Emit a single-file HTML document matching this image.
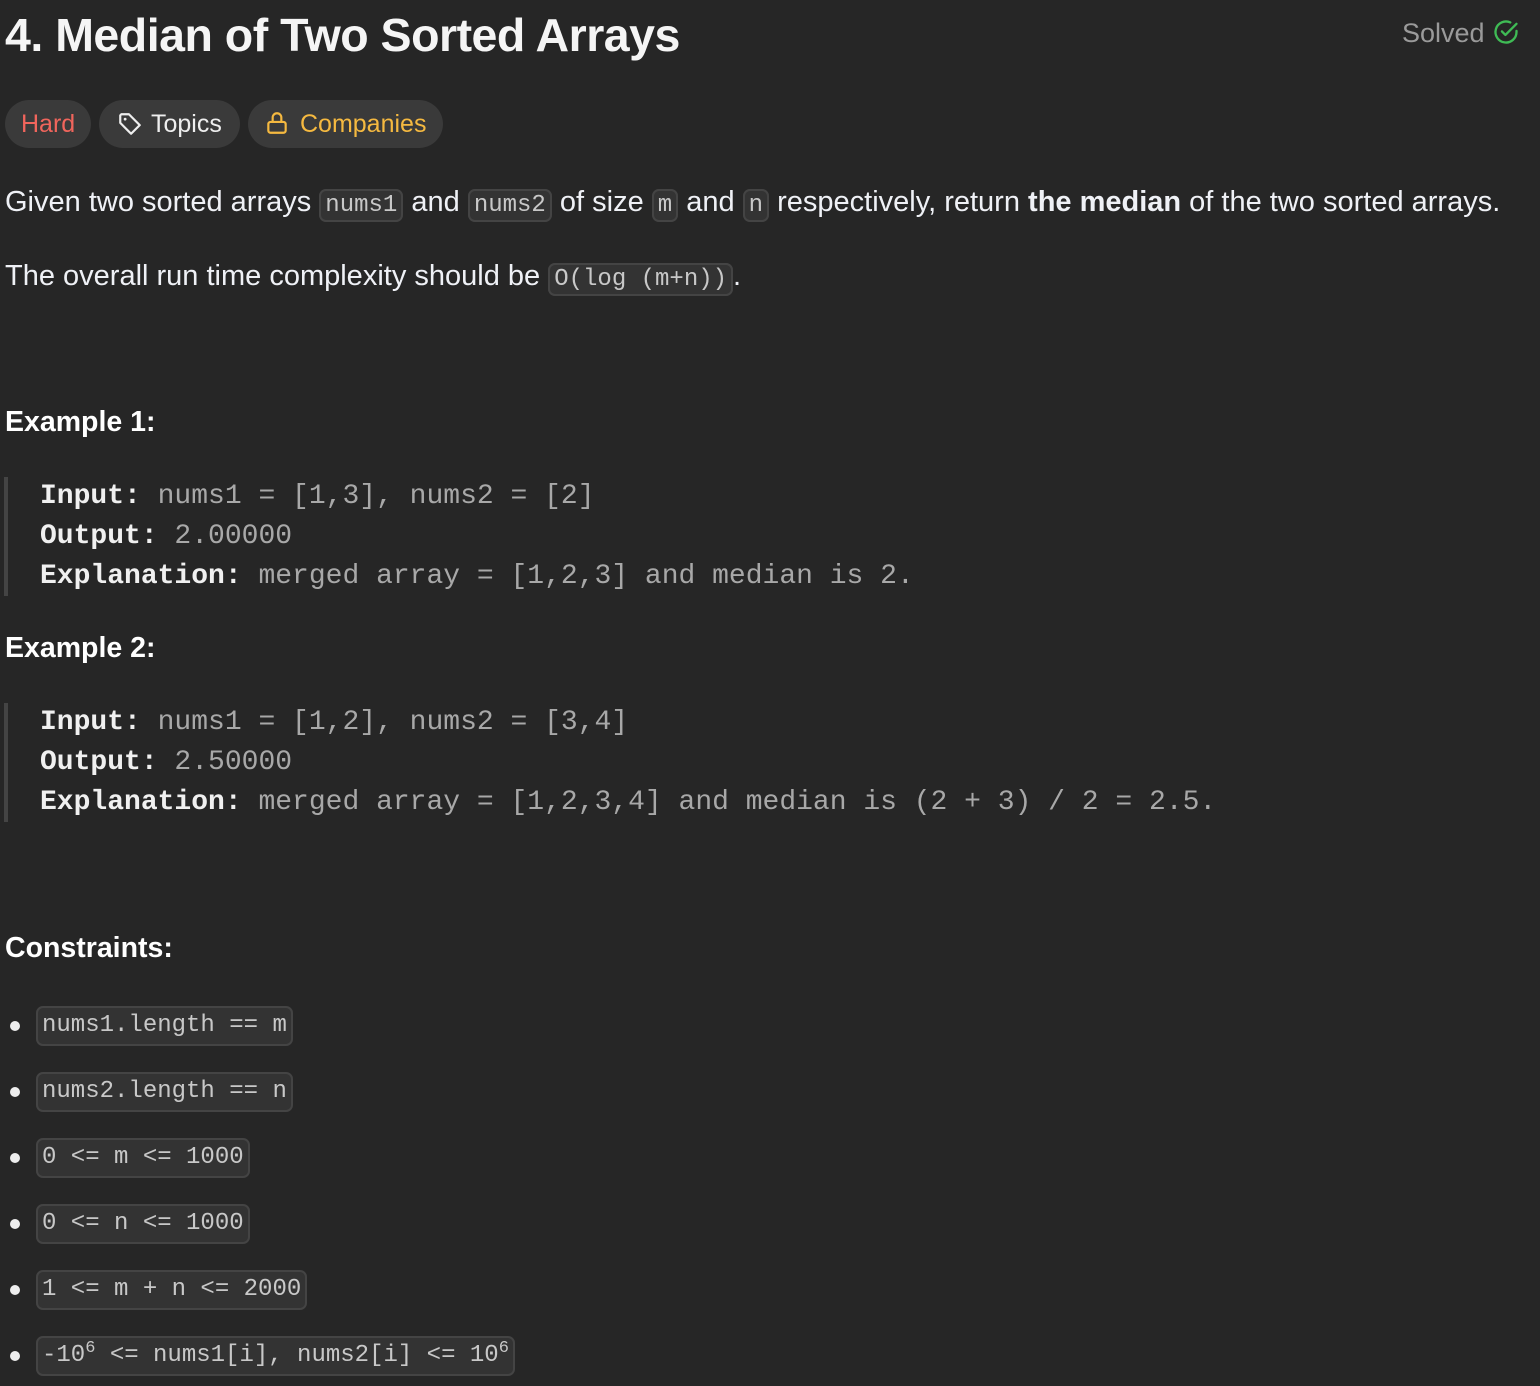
<!DOCTYPE html>
<html><head><meta charset="utf-8"><style>
body{margin:0;background:#262626;width:1540px;height:1386px;overflow:hidden;font-family:"Liberation Sans",sans-serif;color:#eff1f6;position:relative}
.a{position:absolute;white-space:nowrap}
h1{position:absolute;left:5px;top:8px;margin:0;font-size:46.5px;font-weight:bold;letter-spacing:-0.5px;color:#f5f5f5}
.pill{position:absolute;top:100px;height:48px;border-radius:24px;background:#3a3a3a;font-size:25px;line-height:48px;padding:0 16px;box-sizing:border-box}
.p{font-size:29px;line-height:40px}
.p code{font-family:"Liberation Mono",monospace;font-size:24px;color:#c8c8c8;background:#333;border:2px solid #444;border-radius:7px;padding:1px 4px}
.h{font-size:28.5px;font-weight:bold;color:#fff}
.bq{position:absolute;left:4px;width:4px;background:#444}
.pre{font-family:"Liberation Mono",monospace;font-size:28px;line-height:40px;color:#a8a8a8;left:40px}
.pre b{color:#f0f0f0}
.li{left:10px;font-size:24px}
.li::before{content:"";position:absolute;left:0;top:15px;width:10px;height:10px;border-radius:5px;background:#eee}
.li code{position:absolute;left:26px;top:0;font-family:"Liberation Mono",monospace;font-size:24px;color:#c8c8c8;background:#333;border:2px solid #444;border-radius:7px;padding:2px 4px;line-height:32px}
</style></head><body>
<h1>4. Median of Two Sorted Arrays</h1>
<div class="a" style="right:20px;top:18px;font-size:27px;color:#9a9a9a">Solved <svg width="28" height="28" viewBox="0 0 24 24" style="vertical-align:-4px"><path d="M21 11.1V12a9 9 0 1 1-5.3-8.2" fill="none" stroke="#3fbb55" stroke-width="2" stroke-linecap="round"/><path d="M8.5 11.5l3 3L21 5" fill="none" stroke="#3fbb55" stroke-width="2" stroke-linecap="round" stroke-linejoin="round"/></svg></div>
<div class="pill" style="left:5px;width:86px;color:#f0655c">Hard</div>
<div class="pill" style="left:99px;width:141px;color:#eee;padding-left:18px"><svg width="26" height="26" viewBox="0 0 24 24" style="vertical-align:-5px;margin-right:8px"><path d="M3 4v7l10 10 8-8L11 3H4z" fill="none" stroke="#eee" stroke-width="2" stroke-linejoin="round"/><circle cx="7.5" cy="7.5" r="1.3" fill="#eee"/></svg>Topics</div>
<div class="pill" style="left:248px;width:195px;color:#f5b940"><svg width="26" height="26" viewBox="0 0 24 24" style="vertical-align:-4px;margin-right:10px"><rect x="4" y="11" width="16" height="10" rx="2" fill="none" stroke="#f5b940" stroke-width="2"/><path d="M8 11V7a4 4 0 0 1 8 0v4" fill="none" stroke="#f5b940" stroke-width="2"/></svg>Companies</div>
<div class="a p" style="left:5px;top:182px">Given two sorted arrays <code>nums1</code> and <code>nums2</code> of size <code>m</code> and <code>n</code> respectively, return <b>the median</b> of the two sorted arrays.</div>
<div class="a p" style="left:5px;top:256px">The overall run time complexity should be <code>O(log (m+n))</code>.</div>
<div class="a h" style="left:5px;top:406px">Example 1:</div>
<div class="bq" style="top:477px;height:119px"></div>
<div class="a pre" style="top:477px"><b>Input:</b> nums1 = [1,3], nums2 = [2]<br><b>Output:</b> 2.00000<br><b>Explanation:</b> merged array = [1,2,3] and median is 2.</div>
<div class="a h" style="left:5px;top:632px">Example 2:</div>
<div class="bq" style="top:703px;height:119px"></div>
<div class="a pre" style="top:703px"><b>Input:</b> nums1 = [1,2], nums2 = [3,4]<br><b>Output:</b> 2.50000<br><b>Explanation:</b> merged array = [1,2,3,4] and median is (2 + 3) / 2 = 2.5.</div>
<div class="a h" style="left:5px;top:932px">Constraints:</div>
<div class="a li" style="top:1006px"><code>nums1.length == m</code></div>
<div class="a li" style="top:1072px"><code>nums2.length == n</code></div>
<div class="a li" style="top:1138px"><code>0 &lt;= m &lt;= 1000</code></div>
<div class="a li" style="top:1204px"><code>0 &lt;= n &lt;= 1000</code></div>
<div class="a li" style="top:1270px"><code>1 &lt;= m + n &lt;= 2000</code></div>
<div class="a li" style="top:1336px"><code>-10<sup style="font-size:17px;line-height:0">6</sup> &lt;= nums1[i], nums2[i] &lt;= 10<sup style="font-size:17px;line-height:0">6</sup></code></div>
</body></html>
